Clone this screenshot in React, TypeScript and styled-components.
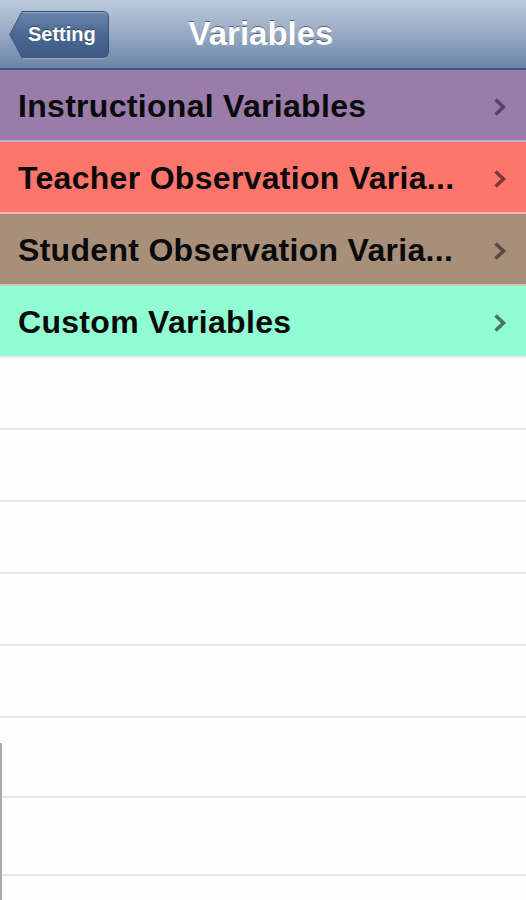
import styled, { createGlobalStyle } from 'styled-components';

const GlobalStyle = createGlobalStyle`
  html, body {
    margin: 0;
    padding: 0;
    background: #fdfdfd;
  }

  body {
    font-family: "Liberation Sans", Arial, sans-serif;
  }
`;

const Screen = styled.div`
  position: relative;
  width: 526px;
  height: 900px;
  overflow: hidden;
  background: #fdfdfd;
`;

const NavBar = styled.div`
  position: relative;
  display: flex;
  align-items: center;
  justify-content: center;
  height: 68px;
  background: linear-gradient(#bccadc, #97aac3 50%, #6b84a6 100%);
  border-bottom: 2px solid #3d5679;
`;

const BackButton = styled.div`
  position: absolute;
  left: 9px;
  top: 11px;
  display: flex;
  align-items: center;
`;

const BackTip = styled.svg`
  display: block;
  width: 15px;
  height: 47px;
  margin-right: -1px;
`;

const BackBody = styled.div`
  display: flex;
  align-items: center;
  justify-content: center;
  height: 45px;
  padding: 0 12px 0 5px;
  border: 1px solid #3b5275;
  border-left: none;
  border-radius: 0 6px 6px 0;
  background: linear-gradient(#6c87ad, #4a6792 50%, #3e5c87 100%);
  box-shadow: inset 0 1px 0 rgba(255, 255, 255, 0.25), 0 1px 0 rgba(255, 255, 255, 0.3);
  color: #fff;
  font-size: 20px;
  font-weight: bold;
  text-shadow: 0 -1px 0 rgba(0, 0, 0, 0.4);
`;

const Title = styled.h1`
  margin: 0 4px 0 0;
  color: #fff;
  font-size: 33px;
  font-weight: bold;
  text-shadow: 0 -1px 0 rgba(0, 0, 0, 0.45);
`;

const Row = styled.div<{ bg: string; line: string }>`
  display: flex;
  align-items: center;
  height: 72px;
  padding: 3px 19px 0 18px;
  box-sizing: border-box;
  background: ${({ bg }) => bg};
  border-bottom: 2px solid ${({ line }) => line};
`;

const RowLabel = styled.span`
  flex: 1;
  min-width: 0;
  overflow: hidden;
  white-space: nowrap;
  padding-right: 14px;
  color: #0a0a0a;
  font-size: 32px;
  font-weight: bold;
  letter-spacing: 0.3px;
`;

const Chevron = styled.svg`
  flex: none;
  width: 14px;
  height: 20px;
`;

const EmptyRow = styled.div<{ h: number }>`
  height: ${({ h }) => h}px;
  border-bottom: 2px solid #e7e7e7;
  box-sizing: border-box;
`;

const ScrollMark = styled.div`
  position: absolute;
  left: 0;
  top: 743px;
  width: 2px;
  height: 157px;
  background: #a9a9a9;
`;

const rows = [
  { label: 'Instructional Variables', bg: '#9a7caa', line: '#c4b1cc', mark: '#5a4166' },
  { label: 'Teacher Observation Varia...', bg: '#fe756c', line: '#f6b8b1', mark: '#7c3a36' },
  { label: 'Student Observation Varia...', bg: '#a88f7a', line: '#cfc2b5', mark: '#594b40' },
  { label: 'Custom Variables', bg: '#91fdd2', line: '#eaeaea', mark: '#4a7565' },
];

const emptyHeights = [72, 72, 72, 72, 72, 80, 78, 40];

export default function App() {
  return (
    <Screen>
      <GlobalStyle />
      <NavBar>
        <BackButton>
          <BackTip viewBox="0 0 15 47">
            <defs>
              <linearGradient id="tipFill" x1="0" y1="0" x2="0" y2="1">
                <stop offset="0" stopColor="#6c87ad" />
                <stop offset="0.5" stopColor="#4a6792" />
                <stop offset="1" stopColor="#3e5c87" />
              </linearGradient>
            </defs>
            <path d="M15.5 0.5 L13 0.5 L0.8 23.5 L13 46.5 L15.5 46.5 Z" fill="url(#tipFill)" />
            <path d="M15.5 0.5 L13 0.5 L0.8 23.5 L13 46.5 L15.5 46.5" fill="none" stroke="#3b5275" strokeWidth="1" />
          </BackTip>
          <BackBody>Setting</BackBody>
        </BackButton>
        <Title>Variables</Title>
      </NavBar>
      {rows.map((r) => (
        <Row key={r.label} bg={r.bg} line={r.line}>
          <RowLabel>{r.label}</RowLabel>
          <Chevron viewBox="0 0 14 20">
            <path d="M2.5 2.5 L10.5 10 L2.5 17.5" fill="none" stroke={r.mark} strokeWidth="3.6" strokeLinejoin="miter" />
          </Chevron>
        </Row>
      ))}
      {emptyHeights.map((h, i) => (
        <EmptyRow key={i} h={h} />
      ))}
      <ScrollMark />
    </Screen>
  );
}
